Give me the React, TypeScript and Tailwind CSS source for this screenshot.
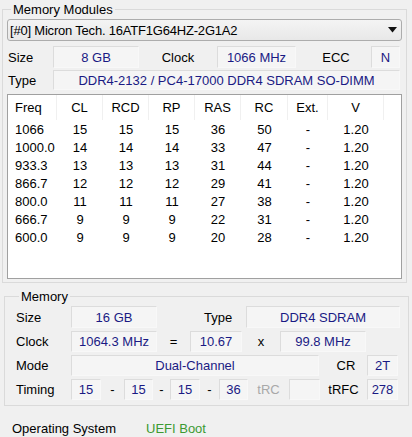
import React from 'react';

const freqRows = [
  ['1066', '15', '15', '15', '36', '50', '-', '1.20'],
  ['1000.0', '14', '14', '14', '33', '47', '-', '1.20'],
  ['933.3', '13', '13', '13', '31', '44', '-', '1.20'],
  ['866.7', '12', '12', '12', '29', '41', '-', '1.20'],
  ['800.0', '11', '11', '11', '27', '38', '-', '1.20'],
  ['666.7', '9', '9', '9', '22', '31', '-', '1.20'],
  ['600.0', '9', '9', '9', '20', '28', '-', '1.20'],
];

const headers = ['Freq', 'CL', 'RCD', 'RP', 'RAS', 'RC', 'Ext.', 'V'];
const colWidths = ['w-[49px]', 'w-[46px]', 'w-[46px]', 'w-[46px]', 'w-[46px]', 'w-[47px]', 'w-[40px]', 'w-[56px]'];

function Val({ w, children, h = 'h-[22px]' }: { w: string; children?: React.ReactNode; h?: string }) {
  return (
    <div
      className={`${w} ${h} shrink-0 flex items-center justify-center border border-t-[#dcdcdc] border-l-[#dcdcdc] border-r-[#f8f8f8] border-b-[#f8f8f8] bg-[#f5f5f5] text-[#1a1a84]`}
    >
      {children}
    </div>
  );
}

export default function App() {
  return (
    <div className="w-[412px] h-[437px] bg-[#f0f0f0] text-black text-[13px] leading-[15px] font-['Liberation_Sans',Arial,sans-serif] overflow-hidden">
      <fieldset className="mt-[2px] ml-[2px] w-[405px] h-[281px] border border-[#dadada] px-[4px] pt-[2px]">
        <legend className="ml-[4px] px-[2px]">Memory Modules</legend>

        {/* module selector */}
        <div className="h-[22px] flex items-center justify-between border border-[#acacac] rounded-[3px] bg-[linear-gradient(#f4f4f4,#e8e8e8)] pl-[2px] pr-[4px]">
          <span className="tracking-[-0.2px]">[#0] Micron Tech. 16ATF1G64HZ-2G1A2</span>
          <svg width="9" height="6" viewBox="0 0 9 6">
            <polygon points="0,0 9,0 4.5,5.5" fill="#111" />
          </svg>
        </div>

        <div className="mt-[5px] flex items-center">
          <span className="w-[46px] pl-[1px]">Size</span>
          <Val w="w-[86px]">8 GB</Val>
          <span className="w-[78px] text-center">Clock</span>
          <Val w="w-[79px]">1066 MHz</Val>
          <span className="w-[75px] text-center pl-[5px]">ECC</span>
          <Val w="w-[29px]">N</Val>
        </div>

        <div className="mt-[2px] flex items-center">
          <span className="w-[46px] pl-[1px]">Type</span>
          <Val w="w-[347px]" h="h-[20px]">DDR4-2132 / PC4-17000 DDR4 SDRAM SO-DIMM</Val>
        </div>

        {/* timings table */}
        <div className="mt-[4px] w-[395px] h-[185px] border border-[#a0a0a0] bg-white">
          <div className="flex h-[25px] items-center">
            {headers.map((h, i) => (
              <div
                key={h}
                className={`${colWidths[i]} h-full flex items-center border-r border-[#f0f0f0] ${i === 0 ? 'pl-[7px]' : 'justify-center'}`}
              >
                {h}
              </div>
            ))}
          </div>
          {freqRows.map((r) => (
            <div key={r[0]} className="flex h-[18px] items-center">
              {r.map((c, i) => (
                <div
                  key={i}
                  className={`${colWidths[i]} flex ${i === 0 ? 'pl-[7px]' : 'justify-center'}`}
                >
                  {c}
                </div>
              ))}
            </div>
          ))}
        </div>
      </fieldset>

      <fieldset className="mt-[6px] ml-[4px] w-[405px] border border-[#dadada] pl-[11px] pb-[5px]">
        <legend className="ml-[3px] px-[2px]">Memory</legend>

        <div className="mt-[2px] flex flex-col gap-[3px]">
          <div className="flex items-center">
            <span className="w-[55px]">Size</span>
            <Val w="w-[86px]" h="h-[22px]">16 GB</Val>
            <span className="w-[89px] pl-[47px]">Type</span>
            <Val w="w-[154px]" h="h-[22px]">DDR4 SDRAM</Val>
          </div>

          <div className="flex items-center">
            <span className="w-[55px]">Clock</span>
            <Val w="w-[86px]" h="h-[21px]">1064.3 MHz</Val>
            <span className="w-[33px] text-center">=</span>
            <Val w="w-[52px]" h="h-[21px]">10.67</Val>
            <span className="w-[38px] text-center">x</span>
            <Val w="w-[86px]" h="h-[21px]">99.8 MHz</Val>
          </div>

          <div className="flex items-center">
            <span className="w-[55px]">Mode</span>
            <Val w="w-[248px]" h="h-[21px]">Dual-Channel</Val>
            <span className="w-[48px] text-center pl-[6px]">CR</span>
            <Val w="w-[31px]" h="h-[21px]">2T</Val>
          </div>

          <div className="flex items-center">
            <span className="w-[55px]">Timing</span>
            <Val w="w-[30px]" h="h-[21px]">15</Val>
            <span className="w-[23px] text-center">-</span>
            <Val w="w-[29px]" h="h-[21px]">15</Val>
            <span className="w-[17px] text-center">-</span>
            <Val w="w-[30px]" h="h-[21px]">15</Val>
            <span className="w-[19px] text-center">-</span>
            <Val w="w-[29px]" h="h-[21px]">36</Val>
            <span className="w-[41px] text-center text-[#a8a8a8]">tRC</span>
            <Val w="w-[31px]" h="h-[21px]" />
            <span className="w-[47px] text-center">tRFC</span>
            <Val w="w-[31px]" h="h-[21px]">278</Val>
          </div>
        </div>
      </fieldset>

      <div className="mt-[15px] flex pl-[12px]">
        <span className="w-[134px]">Operating System</span>
        <span className="text-[#3c9a32]">UEFI Boot</span>
      </div>
    </div>
  );
}
